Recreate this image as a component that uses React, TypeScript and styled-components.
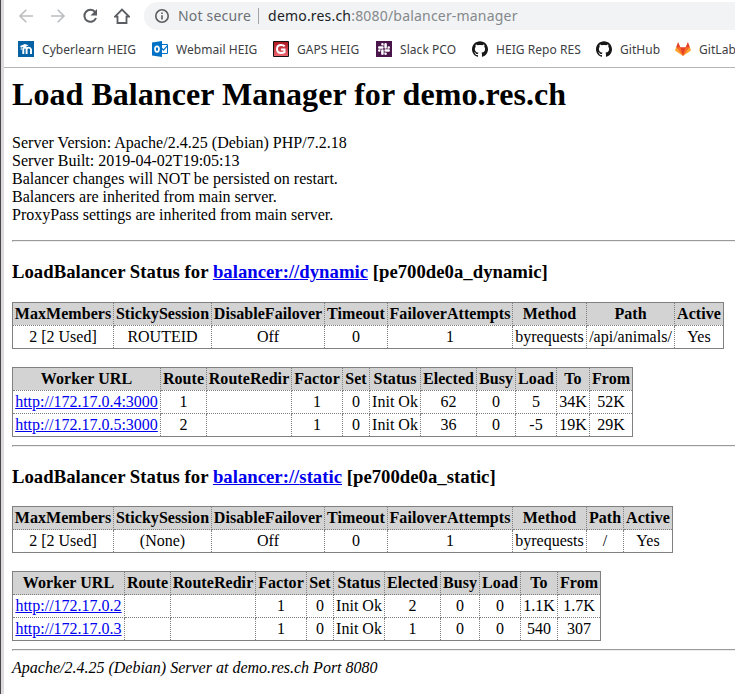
import React from "react";
import styled, { createGlobalStyle } from "styled-components";
import { SiGithub, SiSlack } from "react-icons/si";

const GlobalStyle = createGlobalStyle`
  html, body { margin: 0; padding: 0; background: #fff; overflow: hidden; }
`;

const Window = styled.div`
  display: flex;
  width: 100vw;
  height: 694px;
  overflow: hidden;
  background: #fff;
`;

const WindowEdge = styled.div`
  flex: 0 0 4px;
  box-sizing: border-box;
  border-left: 1px solid #4b4549;
  background: #dedbde;
`;

const Browser = styled.div`
  flex: 1;
  min-width: 0;
  overflow: hidden;
`;

const Chrome = styled.header`
  box-sizing: border-box;
  height: 68px;
  border-bottom: 1px solid #b4b6b9;
  font-family: "Noto Sans", sans-serif;
`;

const Toolbar = styled.div`
  display: flex;
  align-items: center;
  height: 28px;
  padding: 2px 0 0 14px;
  gap: 16px;
`;

const NavIcon = styled.svg<{ $muted?: boolean }>`
  flex: 0 0 16px;
  width: 16px;
  height: 16px;
  fill: none;
  stroke: ${(p) => (p.$muted ? "#bbbdbf" : "#5a5d61")};
  stroke-width: ${(p) => (p.$muted ? 1.6 : 2)};
`;

const AddressBar = styled.div`
  display: flex;
  align-items: center;
  box-sizing: border-box;
  flex: 0 0 640px;
  height: 28px;
  margin-left: -2px;
  padding-left: 10px;
  border-radius: 14px 0 0 14px;
  background: #f1f3f4;
  font-size: 14px;
  line-height: 28px;
  letter-spacing: 0.19px;
  color: #85888c;
  white-space: pre;
`;

const Security = styled.span`
  margin-left: 8px;
  color: #6c7074;
`;

const Separator = styled.span`
  width: 1px;
  height: 16px;
  margin: 0 9px 0 7px;
  background: #a2a5a9;
`;

const Host = styled.span`
  color: #202124;
`;

const Bookmarks = styled.nav`
  display: flex;
  height: 39px;
  padding-left: 14px;
  white-space: nowrap;
`;

const Bookmark = styled.span<{ $width: number }>`
  display: flex;
  align-items: center;
  flex: 0 0 ${(p) => p.$width}px;
  gap: 8px;
  height: 37px;
  padding-top: 1px;
  box-sizing: border-box;
  font-size: 12px;
  letter-spacing: 0.05px;
  color: #3c4043;

  svg { flex: 0 0 16px; width: 16px; height: 16px; }
`;

const SlackTile = styled.span`
  display: flex;
  align-items: center;
  justify-content: center;
  width: 16px;
  height: 16px;
  background: #4a154b;
  color: #fff;

  svg { flex: 0 0 12px; width: 12px; height: 12px; }
`;

const Page = styled.main`
  padding: 8px 0 0 8px;
  font-family: "Liberation Serif", "Times New Roman", serif;
  font-size: 16px;
  color: #000;
`;

const Title = styled.h1`
  margin: 0 0 21.44px;
  font-size: 32px;
  letter-spacing: 0.05px;
`;

const ServerInfo = styled.dl`
  margin: 0 0 16px;
`;

const Version = styled.dt`
  letter-spacing: 0.02px;
`;

const Rule = styled.hr`
  margin: 8px -8px 8px 0;
`;

const StatusTitle = styled.h3`
  margin: 18.72px 0;
  font-size: 18.72px;
  letter-spacing: 0.02px;
`;

const Link = styled.a`
  color: #0000ee;
  text-decoration: underline;
`;

const Table = styled.table<{ $width: number }>`
  width: ${(p) => p.$width}px;
  table-layout: fixed;
  border: 1px solid gray;
  border-collapse: collapse;
  background: white;
  text-align: center;
  white-space: nowrap;
`;

const Column = styled.col<{ $width: number }>`
  width: ${(p) => p.$width}px;
`;

const HeadCell = styled.th`
  border: 1px dotted gray;
  padding: 2px 0;
  background: lightgray;
  letter-spacing: 0.06px;
`;

const Cell = styled.td`
  border: 1px dotted gray;
  padding: 2px 0;
`;

const Footer = styled.address`
  font-style: italic;
`;

const MoodleIcon = () => (
  <svg viewBox="0 0 16 16">
    <path fill="#0563a5" d="M0 0h16v16H0z" />
    <path fill="none" stroke="#fff" strokeWidth="1.9" d="M5.3 13V8.2q0-1.6 1.6-1.6t1.7 1.6V13M8.6 8.2q0-1.6 2-1.6T13 8.4V13" />
    <path fill="#fff" d="M1.6 5.2 6.8 3l3.7 1.2-3.7 2.3-3.2-.4V9h-.8V5.8z" />
  </svg>
);

const OutlookIcon = () => (
  <svg viewBox="0 0 16 16">
    <path fill="#fff" stroke="#0072c6" d="M8 3.5h7.5v9H8z" />
    <path fill="none" stroke="#0072c6" strokeWidth="1.2" d="m9.5 7 2 2.2 4-4.6" />
    <path fill="#0072c6" d="M0 1.4 10 0v16L0 14.6z" />
    <ellipse cx="5" cy="8.1" rx="2" ry="2.8" fill="none" stroke="#fff" strokeWidth="1.7" />
  </svg>
);

const GapsIcon = () => (
  <svg viewBox="0 0 16 16">
    <defs>
      <linearGradient id="gaps" x2="0" y2="1">
        <stop stopColor="#a9151d" />
        <stop offset="1" stopColor="#ee6872" />
      </linearGradient>
    </defs>
    <path fill="url(#gaps)" stroke="#151010" d="M.5.5h15v15H.5z" />
    <path fill="none" stroke="#fff" strokeWidth="2" d="M11.7 5.3Q10.4 4 8.2 4 4 4 4 8t4.1 4q2 0 3.4-.9V8.4H8" />
  </svg>
);

const GitlabIcon = () => (
  <svg viewBox="0 0 16 16">
    <path fill="#e24329" d="M3.1 1 5.4 6.3h5.2L12.9 1l2 5.3L8 15 1.1 6.3z" />
    <path fill="#fc6d26" d="M1.1 6.3h4.3L8 15zM14.9 6.3h-4.3L8 15z" />
    <path fill="#fca326" d="M1.1 6.3 0 9.5 8 15zM14.9 6.3 16 9.5 8 15z" />
  </svg>
);

const bookmarks = [
  { label: "Cyberlearn HEIG", width: 134, icon: <MoodleIcon /> },
  { label: "Webmail HEIG", width: 121, icon: <OutlookIcon /> },
  { label: "GAPS HEIG", width: 103, icon: <GapsIcon /> },
  { label: "Slack PCO", width: 96, icon: <SlackTile><SiSlack /></SlackTile> },
  { label: "HEIG Repo RES", width: 124, icon: <SiGithub color="#181717" /> },
  { label: "GitHub", width: 79, icon: <SiGithub color="#181717" /> },
  { label: "GitLab", width: 80, icon: <GitlabIcon /> },
];

const statusHeads = ["MaxMembers", "StickySession", "DisableFailover", "Timeout", "FailoverAttempts", "Method", "Path", "Active"];
const workerHeads = ["Worker URL", "Route", "RouteRedir", "Factor", "Set", "Status", "Elected", "Busy", "Load", "To", "From"];

const balancers = [
  {
    name: "dynamic",
    statusWidths: [101, 98, 113, 63, 125, 74, 88, 49],
    workerWidths: [148, 46, 85, 51, 27, 51, 56, 39, 41, 33, 43],
    status: ["2 [2 Used]", "ROUTEID", "Off", "0", "1", "byrequests", "/api/animals/", "Yes"],
    workers: [
      ["http://172.17.0.4:3000", "1", "", "1", "0", "Init Ok", "62", "0", "5", "34K", "52K"],
      ["http://172.17.0.5:3000", "2", "", "1", "0", "Init Ok", "36", "0", "-5", "19K", "29K"],
    ],
  },
  {
    name: "static",
    statusWidths: [101, 98, 113, 63, 125, 74, 37, 49],
    workerWidths: [112, 46, 85, 51, 27, 51, 56, 39, 41, 37, 43],
    status: ["2 [2 Used]", "(None)", "Off", "0", "1", "byrequests", "/", "Yes"],
    workers: [
      ["http://172.17.0.2", "", "", "1", "0", "Init Ok", "2", "0", "0", "1.1K", "1.7K"],
      ["http://172.17.0.3", "", "", "1", "0", "Init Ok", "1", "0", "0", "540", "307"],
    ],
  },
];

interface DataTableProps {
  heads: string[];
  widths: number[];
  rows: string[][];
}

function DataTable({ heads, widths, rows }: DataTableProps) {
  return (
    <Table $width={widths.reduce((sum, w) => sum + w, 1)}>
      <colgroup>
        {widths.map((w, i) => <Column key={heads[i]} $width={w} />)}
      </colgroup>
      <tbody>
        <tr>{heads.map((h) => <HeadCell key={h}>{h}</HeadCell>)}</tr>
        {rows.map((row) => (
          <tr key={row[0]}>
            {row.map((value, i) => (
              <Cell key={heads[i]}>
                {value.startsWith("http") ? <Link href="#">{value}</Link> : value}
              </Cell>
            ))}
          </tr>
        ))}
      </tbody>
    </Table>
  );
}

export default function App() {
  return (
    <Window>
      <GlobalStyle />
      <WindowEdge />
      <Browser>
        <Chrome>
          <Toolbar>
            <NavIcon $muted viewBox="0 0 16 16"><path d="M15 8H2M8.3 1.7 2 8l6.3 6.3" /></NavIcon>
            <NavIcon $muted viewBox="0 0 16 16"><path d="M1 8h13M7.7 1.7 14 8l-6.3 6.3" /></NavIcon>
            <NavIcon viewBox="0 0 16 16"><path d="M13.2 4.2A6 6 0 1 0 14 10" /><path fill="#5a5d61" stroke="none" d="M15 1v6.5H8.5z" /></NavIcon>
            <NavIcon viewBox="0 0 16 16"><path d="M1 8.6 8 1.6l7 7h-2.5V15h-9V8.6z" strokeWidth="1.8" /></NavIcon>
            <AddressBar>
              <NavIcon viewBox="0 0 16 16"><circle cx="8" cy="8" r="6.2" strokeWidth="1.6" /><path d="M8 7.2v4.3M8 4.4V6" strokeWidth="1.6" /></NavIcon>
              <Security>Not secure</Security>
              <Separator />
              <Host>demo.res.ch</Host>:8080/balancer-manager
            </AddressBar>
          </Toolbar>
          <Bookmarks>
            {bookmarks.map((b) => (
              <Bookmark key={b.label} $width={b.width}>{b.icon}{b.label}</Bookmark>
            ))}
          </Bookmarks>
        </Chrome>
        <Page>
          <Title>Load Balancer Manager for demo.res.ch</Title>
          <ServerInfo>
            <Version>Server Version: Apache/2.4.25 (Debian) PHP/7.2.18</Version>
            <dt>Server Built: 2019-04-02T19:05:13</dt>
            <dt>Balancer changes will NOT be persisted on restart.</dt>
            <dt>Balancers are inherited from main server.</dt>
            <dt>ProxyPass settings are inherited from main server.</dt>
          </ServerInfo>
          {balancers.map((b) => (
            <section key={b.name}>
              <Rule />
              <StatusTitle>
                LoadBalancer Status for <Link href="#">balancer://{b.name}</Link> [pe700de0a_{b.name}]
              </StatusTitle>
              <DataTable heads={statusHeads} widths={b.statusWidths} rows={[b.status]} />
              <br />
              <DataTable heads={workerHeads} widths={b.workerWidths} rows={b.workers} />
            </section>
          ))}
          <Rule />
          <Footer>Apache/2.4.25 (Debian) Server at demo.res.ch Port 8080</Footer>
        </Page>
      </Browser>
    </Window>
  );
}
